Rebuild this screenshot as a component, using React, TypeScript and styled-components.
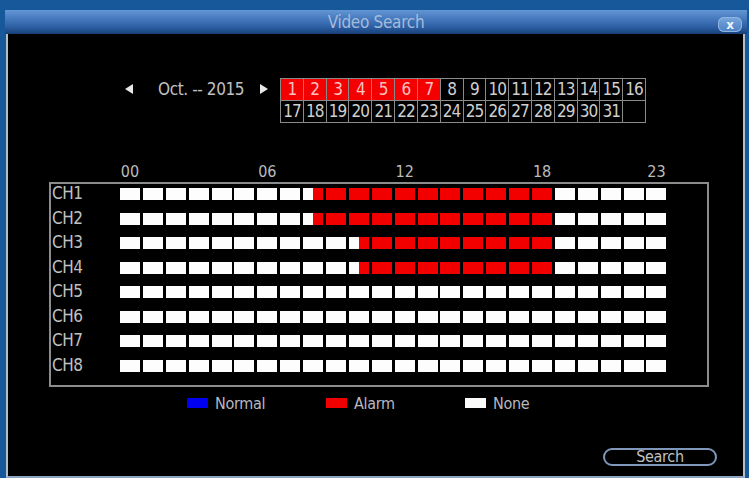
import React from "react";
import styled, { createGlobalStyle } from "styled-components";

const FONT = `"Liberation Sans Narrow", "DejaVu Sans Condensed", "Liberation Sans", sans-serif`;

const GlobalStyle = createGlobalStyle`
  html, body {
    margin: 0;
    padding: 0;
    background: #16589a;
    width: 749px;
    height: 478px;
    overflow: hidden;
    font-family: ${FONT};
  }
`;

const Screen = styled.div`
  width: 749px;
  height: 478px;
  padding-top: 10px;
  box-sizing: border-box;
`;

const Window = styled.div`
  margin-left: 5px;
  width: 742px;
  display: flex;
  flex-direction: column;
`;

const TitleBar = styled.div`
  height: 24px;
  position: relative;
  display: flex;
  align-items: center;
  justify-content: center;
  background: linear-gradient(to bottom, #6396d4 0%, #3f73b8 45%, #2a5b9e 75%, #163f78 100%);
`;

const Title = styled.span`
  font-family: ${FONT};
  font-size: 17px;
  color: #a4bbda;
  letter-spacing: -0.3px;
`;

const CloseButton = styled.div`
  position: absolute;
  right: 5px;
  top: 7px;
  width: 24px;
  height: 15px;
  border-radius: 6px;
  background: linear-gradient(to bottom, #7aa6dc, #4a80c2);
  box-shadow: inset 0 0 0 1px #8fb4e2;
  display: flex;
  align-items: center;
  justify-content: center;
  color: #eef4fb;
  font-family: "DejaVu Sans", sans-serif;
  font-size: 12px;
  font-weight: bold;
  line-height: 1;
`;

const Panel = styled.div`
  height: 444px;
  margin: 0 2px 0 1px;
  box-sizing: border-box;
  background: #000;
  border-left: 2px solid #b4bfcc;
  border-right: 2px solid #b4bfcc;
  border-bottom: 2px solid #8fa6c2;
  display: flex;
  flex-direction: column;
  color: #c8c8c8;
  font-family: ${FONT};
`;

/* ---------- month selector + day calendar ---------- */

const TopRow = styled.div`
  margin-top: 44px;
  display: flex;
  align-items: flex-start;
  padding-left: 117px;
`;

const NavRow = styled.div`
  height: 22px;
  display: flex;
  align-items: center;
`;

const Arrow = styled.span<{ $dir: "left" | "right" }>`
  width: 0;
  height: 0;
  border-top: 5px solid transparent;
  border-bottom: 5px solid transparent;
  ${(p) =>
    p.$dir === "left"
      ? "border-right: 8px solid #e8e8e8; margin-right: 25px;"
      : "border-left: 8px solid #e8e8e8; margin-right: 12px;"}
`;

const MonthLabel = styled.span`
  width: 89px;
  margin-right: 13px;
  white-space: nowrap;
  font-size: 17px;
  letter-spacing: -0.4px;
  color: #c0c0c0;
`;

const Calendar = styled.div`
  display: grid;
  grid-template-columns: repeat(16, 1fr);
  grid-template-rows: repeat(2, 21px);
  gap: 1px;
  padding: 1px;
  width: 366px;
  box-sizing: border-box;
  background: #8a8a8a;
`;

const Day = styled.div<{ $marked: boolean }>`
  background: ${(p) => (p.$marked ? "#f40000" : "#000")};
  color: ${(p) => (p.$marked ? "#ffc0c0" : "#cfcfcf")};
  font-size: 17px;
  line-height: 21px;
  text-align: center;
  letter-spacing: -1px;
  overflow: hidden;
`;

/* ---------- 24h timeline ---------- */

const HOUR_COLS = "repeat(24, 20px)";
const HOUR_GAP = "2.9px";

const HourScale = styled.div`
  margin: 38px 0 0 112px;
  height: 21px;
  display: grid;
  grid-template-columns: ${HOUR_COLS};
  column-gap: ${HOUR_GAP};
`;

const HourLabel = styled.span<{ $col: number }>`
  grid-column: ${(p) => p.$col + 1};
  display: flex;
  justify-content: center;
  white-space: nowrap;
  font-size: 16px;
  line-height: 21px;
  color: #bcbcbc;
`;

const TimelineBox = styled.div`
  margin-left: 41px;
  width: 660px;
  box-sizing: border-box;
  border: 2px solid #8c8c8c;
  padding: 0 0 5px 1px;
`;

const ChannelRow = styled.div`
  height: 24.5px;
  display: flex;
  align-items: flex-start;
`;

const ChannelName = styled.span`
  width: 68px;
  line-height: 20px;
  margin-top: -1px;
  font-size: 17px;
  letter-spacing: -0.5px;
  color: #c0c0c0;
`;

const Hours = styled.div`
  margin-top: 4px;
  display: grid;
  grid-template-columns: ${HOUR_COLS};
  column-gap: ${HOUR_GAP};
`;

const HourCell = styled.div<{ $alarmFrom: number }>`
  height: 12px;
  background: ${(p) =>
    p.$alarmFrom <= 0
      ? "#f20000"
      : p.$alarmFrom >= 1
      ? "#fdfdfd"
      : `linear-gradient(to right, #fdfdfd ${p.$alarmFrom * 100}%, #f20000 ${p.$alarmFrom * 100}%)`};
`;

/* ---------- legend + footer ---------- */

const Legend = styled.div`
  margin-top: 9px;
  padding-left: 179px;
  height: 14px;
  display: flex;
  align-items: center;
`;

const LegendItem = styled.div`
  width: 139px;
  display: flex;
  align-items: center;
  gap: 7px;
  font-size: 16px;
  letter-spacing: -0.3px;
  color: #b8b8c0;
`;

const Swatch = styled.span<{ $color: string }>`
  width: 21px;
  height: 10px;
  background: ${(p) => p.$color};
`;

const Footer = styled.div`
  margin-top: auto;
  padding: 0 26px 10px 0;
  display: flex;
  justify-content: flex-end;
`;

const SearchButton = styled.button`
  width: 114px;
  height: 18px;
  box-sizing: border-box;
  border: 2px solid #7e97ba;
  border-radius: 9px;
  background: #000;
  color: #c0c0c0;
  font-family: ${FONT};
  font-size: 16px;
  line-height: 14px;
  letter-spacing: -0.3px;
  padding: 0;
`;

type Channel = { name: string; alarm?: [number, number] };

const channels: Channel[] = [
  { name: "CH1", alarm: [8.5, 19] },
  { name: "CH2", alarm: [8.5, 19] },
  { name: "CH3", alarm: [10.5, 19] },
  { name: "CH4", alarm: [10.5, 19] },
  { name: "CH5" },
  { name: "CH6" },
  { name: "CH7" },
  { name: "CH8" },
];

const hourLabels = [
  { col: 0, text: "00" },
  { col: 6, text: "06" },
  { col: 12, text: "12" },
  { col: 18, text: "18" },
  { col: 23, text: "23" },
];

// fraction of the hour that is still "none" before alarm recording starts
function alarmStart(ch: Channel, hour: number): number {
  if (!ch.alarm) return 1;
  const [from, to] = ch.alarm;
  if (hour + 1 <= from || hour >= to) return 1;
  if (hour >= from) return 0;
  return from - hour;
}

const days: (number | null)[] = [...Array.from({ length: 31 }, (_, i) => i + 1), null];
const recordedDays = new Set([1, 2, 3, 4, 5, 6, 7]);

export default function App() {
  return (
    <Screen>
      <GlobalStyle />
      <Window>
        <TitleBar>
          <Title>Video Search</Title>
          <CloseButton>x</CloseButton>
        </TitleBar>
        <Panel>
          <TopRow>
            <NavRow>
              <Arrow $dir="left" />
              <MonthLabel>Oct. -- 2015</MonthLabel>
              <Arrow $dir="right" />
            </NavRow>
            <Calendar>
              {days.map((d, i) => (
                <Day key={i} $marked={d !== null && recordedDays.has(d)}>
                  {d ?? ""}
                </Day>
              ))}
            </Calendar>
          </TopRow>

          <HourScale>
            {hourLabels.map((h) => (
              <HourLabel key={h.col} $col={h.col}>
                {h.text}
              </HourLabel>
            ))}
          </HourScale>

          <TimelineBox>
            {channels.map((ch) => (
              <ChannelRow key={ch.name}>
                <ChannelName>{ch.name}</ChannelName>
                <Hours>
                  {Array.from({ length: 24 }, (_, h) => (
                    <HourCell key={h} $alarmFrom={alarmStart(ch, h)} />
                  ))}
                </Hours>
              </ChannelRow>
            ))}
          </TimelineBox>

          <Legend>
            <LegendItem>
              <Swatch $color="#0000f0" />
              Normal
            </LegendItem>
            <LegendItem>
              <Swatch $color="#f00000" />
              Alarm
            </LegendItem>
            <LegendItem>
              <Swatch $color="#fafafa" />
              None
            </LegendItem>
          </Legend>

          <Footer>
            <SearchButton>Search</SearchButton>
          </Footer>
        </Panel>
      </Window>
    </Screen>
  );
}
